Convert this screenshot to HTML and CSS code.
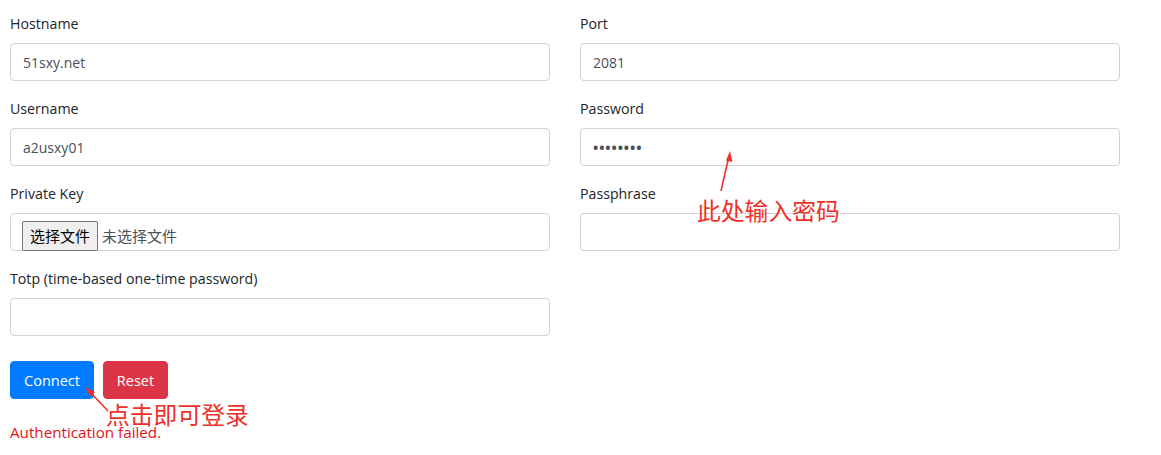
FILE: index.html
```html
<!DOCTYPE html>
<html lang="zh-CN">
<head>
<meta charset="utf-8">
<title>SSH Login</title>
<link rel="stylesheet" href="styles.css">
</head>
<body>
<div class="page">
  <form class="login-form">
    <div class="fields">
      <div class="form-group">
        <label class="label">Hostname</label>
        <input class="form-control" type="text" value="51sxy.net">
      </div>
      <div class="form-group">
        <label class="label">Port</label>
        <input class="form-control" type="text" value="2081">
      </div>
      <div class="form-group">
        <label class="label">Username</label>
        <input class="form-control" type="text" value="a2usxy01">
      </div>
      <div class="form-group">
        <label class="label">Password</label>
        <div class="form-control password">••••••••</div>
      </div>
      <div class="form-group">
        <label class="label">Private Key</label>
        <div class="form-control file-control">
          <span class="file-btn">选择文件</span>
          <span class="file-name">未选择文件</span>
        </div>
      </div>
      <div class="form-group">
        <label class="label">Passphrase</label>
        <input class="form-control" type="text" value="">
      </div>
      <div class="form-group">
        <label class="label">Totp (time-based one-time password)</label>
        <input class="form-control" type="text" value="">
      </div>
    </div>
    <div class="actions">
      <button type="button" class="btn btn-primary">Connect</button>
      <button type="button" class="btn btn-danger">Reset</button>
    </div>
    <div class="error">Authentication failed.</div>
  </form>

  <div class="note note-password">此处输入密码</div>
  <svg class="arrow arrow-password" width="30" height="45" viewBox="0 0 30 45">
    <line x1="6" y1="41" x2="14" y2="6" stroke="#f0302a" stroke-width="1.6"/>
    <polygon points="15,1 17.5,12 11,10.5" fill="#f0302a"/>
  </svg>
  <div class="note note-connect">点击即可登录</div>
  <svg class="arrow arrow-connect" width="30" height="30" viewBox="0 0 30 30">
    <line x1="26" y1="27" x2="7" y2="7" stroke="#f0302a" stroke-width="1.6"/>
    <polygon points="3,3 13,8 8,12" fill="#f0302a"/>
  </svg>
</div>
</body>
</html>
```
FILE: styles.css
```css
html, body {
  margin: 0;
  padding: 0;
  background: #fff;
}
body {
  font-family: "Open Sans", "Noto Sans CJK SC", sans-serif;
  color: #212529;
  font-size: 15px;
}
.page {
  position: relative;
  width: 1161px;
  height: 455px;
  overflow: hidden;
}
.login-form {
  padding: 11px 10px 0 10px;
}
.fields {
  display: grid;
  grid-template-columns: 540px 540px;
  column-gap: 30px;
}
.form-group {
  display: flex;
  flex-direction: column;
  margin-bottom: 15px;
}
.label {
  display: block;
  height: 24px;
  line-height: 24px;
  padding-top: 1px;
  margin-bottom: 7px;
  font-size: 14.2px;
  color: #212529;
}
.form-control {
  box-sizing: border-box;
  height: 38px;
  width: 100%;
  padding: 6px 12px;
  border: 1px solid #ced4da;
  border-radius: 4px;
  font-family: "Open Sans", "Noto Sans CJK SC", sans-serif;
  font-size: 14px;
  color: #495057;
  background: #fff;
  outline: none;
}
.password {
  display: flex;
  align-items: center;
  font-size: 14px;
  font-weight: 700;
  letter-spacing: 0.9px;
  color: #495057;
}
.file-control {
  display: flex;
  align-items: center;
  padding: 6px 11px 0 11px;
}
.file-btn {
  box-sizing: border-box;
  height: 30px;
  line-height: 28px;
  padding: 0 7px;
  border: 1px solid #767676;
  border-radius: 2px;
  background: #efefef;
  color: #000;
  font-family: "Noto Sans CJK SC", sans-serif;
  font-size: 15px;
  margin-top: 1px;
}
.file-name {
  margin-left: 4px;
  font-family: "Noto Sans CJK SC", sans-serif;
  font-size: 15px;
  color: #495057;
}
.actions {
  display: flex;
  gap: 9px;
  margin-top: 10px;
}
.btn {
  height: 38px;
  padding: 0 12px;
  border: 1px solid transparent;
  border-radius: 4px;
  font-family: "Open Sans", sans-serif;
  font-size: 14.5px;
  color: #fff;
  cursor: pointer;
}
.btn-primary {
  background: #007bff;
  border-color: #007bff;
  width: 84px;
}
.btn-danger {
  background: #dc3545;
  border-color: #dc3545;
  width: 65px;
}
.error {
  margin-top: 23px;
  font-size: 15.2px;
  color: #e8111b;
  line-height: 20px;
}
.note {
  position: absolute;
  font-family: "Noto Sans CJK SC", sans-serif;
  font-size: 23.8px;
  line-height: 30px;
  color: #f0302a;
}
.note-password {
  left: 697px;
  top: 195px;
}
.note-connect {
  left: 106px;
  top: 399px;
}
.arrow {
  position: absolute;
}
.arrow-password {
  left: 715px;
  top: 150px;
}
.arrow-connect {
  left: 82px;
  top: 384px;
}
```
